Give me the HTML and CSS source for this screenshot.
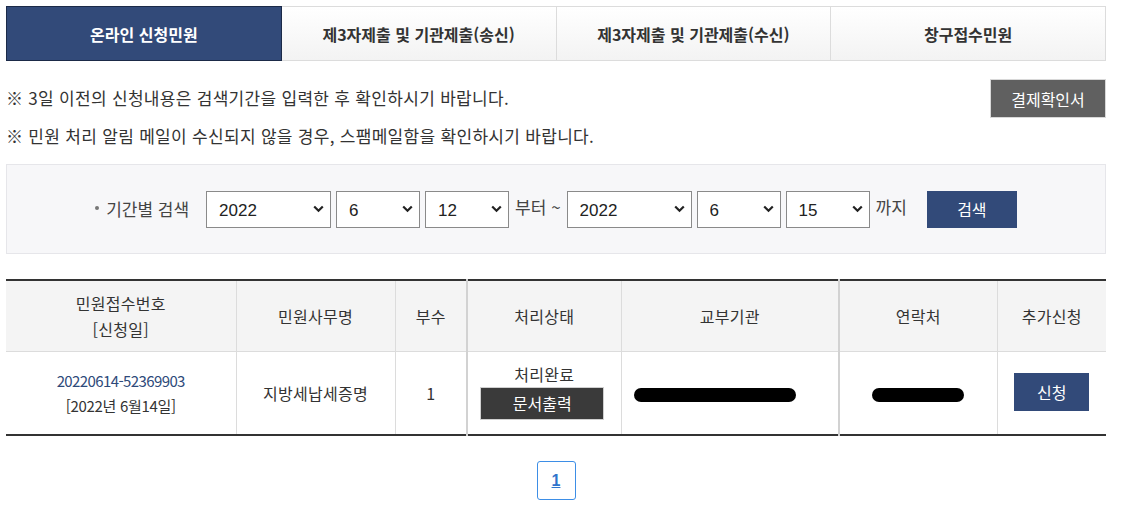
FILE: index.html
```html
<!DOCTYPE html>
<html lang="ko">
<head>
<meta charset="utf-8">
<title>온라인 신청민원</title>
<link rel="stylesheet" href="styles.css">
</head>
<body>
<div class="page">
  <nav class="tabs">
    <a class="tab active">온라인 신청민원</a>
    <a class="tab">제3자제출 및 기관제출(송신)</a>
    <a class="tab">제3자제출 및 기관제출(수신)</a>
    <a class="tab">창구접수민원</a>
  </nav>

  <section class="notice">
    <div class="notice-text">
      <p>※ 3일 이전의 신청내용은 검색기간을 입력한 후 확인하시기 바랍니다.</p>
      <p>※ 민원 처리 알림 메일이 수신되지 않을 경우, 스팸메일함을 확인하시기 바랍니다.</p>
    </div>
    <button class="btn-gray">결제확인서</button>
  </section>

  <section class="search">
    <span class="search-label"><span class="dot"></span>기간별 검색</span>
    <select class="sel sel-year"><option>2022</option></select>
    <select class="sel sel-sm"><option>6</option></select>
    <select class="sel sel-sm"><option>12</option></select>
    <span class="word">부터 ~</span>
    <select class="sel sel-year"><option>2022</option></select>
    <select class="sel sel-sm"><option>6</option></select>
    <select class="sel sel-sm"><option>15</option></select>
    <span class="word">까지</span>
    <button class="btn-navy btn-search">검색</button>
  </section>

  <table class="list">
    <colgroup>
      <col class="c1"><col class="c2"><col class="c3"><col class="c4"><col class="c5"><col class="c6"><col class="c7">
    </colgroup>
    <thead>
      <tr>
        <th>민원접수번호<br>[신청일]</th>
        <th>민원사무명</th>
        <th>부수</th>
        <th class="thick">처리상태</th>
        <th>교부기관</th>
        <th class="thick">연락처</th>
        <th>추가신청</th>
      </tr>
    </thead>
    <tbody>
      <tr>
        <td><span class="num">20220614-52369903</span><br><span class="date">[2022년 6월14일]</span></td>
        <td>지방세납세증명</td>
        <td>1</td>
        <td class="thick"><div class="status">처리완료</div><button class="btn-print">문서출력</button></td>
        <td><span class="redact r1"></span></td>
        <td class="thick"><span class="redact r2"></span></td>
        <td><button class="btn-navy btn-apply">신청</button></td>
      </tr>
    </tbody>
  </table>

  <div class="paging">
    <a class="page-num">1</a>
  </div>
</div>
</body>
</html>
```

FILE: styles.css
```css
* { box-sizing: border-box; }
body {
  margin: 0;
  background: #fff;
  color: #333;
  font-family: "Noto Sans CJK KR", "Noto Sans", sans-serif;
}
.page {
  width: 1112px;
  padding: 6px 6px 0 6px;
}
.tabs {
  display: flex;
  height: 55px;
}
.tab {
  flex: 1;
  display: flex;
  align-items: center;
  justify-content: center;
  border: 1px solid #dcdcdc;
  border-left: none;
  background: linear-gradient(#ffffff, #f3f3f3);
  font-size: 16px;
  font-weight: bold;
  color: #333;
}
.tab.active {
  background: #324a79;
  border: 1px solid #1b2a48;
  color: #fff;
}
.notice {
  display: flex;
  justify-content: space-between;
  align-items: flex-start;
  margin-top: 18px;
}
.notice-text p {
  margin: 0;
  line-height: 38px;
  font-size: 17px;
  letter-spacing: 0.3px;
  color: #333;
}
.btn-gray {
  width: 116px;
  height: 39px;
  background: #606060;
  border: 1px solid #d8d8d8;
  color: #fff;
  font-family: inherit;
  font-size: 16px;
  padding: 0;
}
.search {
  margin-top: 9px;
  height: 90px;
  background: #f7f7f9;
  border: 1px solid #e6e6ea;
  display: flex;
  align-items: center;
  justify-content: center;
}
.search-label {
  font-size: 17px;
  color: #444;
  margin-right: 17px;
  display: flex;
  align-items: center;
  margin-top: -2px;
}
.dot {
  width: 4px;
  height: 4px;
  border-radius: 50%;
  background: #777;
  margin-right: 7px;
}
.sel {
  appearance: none;
  -webkit-appearance: none;
  height: 37px;
  border: 1px solid #8a8a8a;
  background: #fff url("data:image/svg+xml;utf8,<svg xmlns='http://www.w3.org/2000/svg' width='11' height='8' viewBox='0 0 11 8'><path d='M1.2 1.5 L5.5 5.8 L9.8 1.5' fill='none' stroke='%23222' stroke-width='2.2'/></svg>") no-repeat right 6px center;
  font-family: "Liberation Sans", "Noto Sans CJK KR", sans-serif;
  font-size: 17px;
  color: #222;
  padding: 2px 0 0 12px;
  margin-right: 5px;
  border-radius: 0;
}
.sel-year { width: 125px; }
.sel-sm { width: 84px; }
.word {
  font-size: 17px;
  color: #444;
  margin: -6px 6px 0 1px;
}
.btn-navy {
  background: #324a79;
  border: none;
  color: #fff;
  font-family: inherit;
  padding: 0;
}
.btn-search {
  width: 90px;
  height: 37px;
  font-size: 16px;
  margin-left: 14px;
}
.list {
  margin-top: 25px;
  width: 1100px;
  border-collapse: collapse;
  table-layout: fixed;
  border-top: 2px solid #333;
  border-bottom: 2px solid #333;
}
.c1 { width: 230px; }
.c2 { width: 159px; }
.c3 { width: 72px; }
.c4 { width: 154px; }
.c5 { width: 218px; }
.c6 { width: 158px; }
.c7 { width: 109px; }
.list th, .list td {
  text-align: center;
  vertical-align: middle;
  border-left: 1px solid #dcdcdc;
  font-size: 16px;
  color: #333;
  letter-spacing: 0.3px;
}
.list th:first-child, .list td:first-child { border-left: none; }
.list .thick { border-left: 2px solid #d2d2d2; }
.list th {
  background: #f4f4f4;
  font-weight: normal;
  height: 71px;
  line-height: 26px;
  border-bottom: 1px solid #dcdcdc;
}
.list td {
  height: 84px;
  line-height: 24px;
}
.num { color: #2e4a7a; font-size: 15px; letter-spacing: -0.6px; }
.date { font-size: 15px; letter-spacing: -0.3px; }
.status { line-height: 22px; margin-top: -3px; }
.btn-print {
  width: 124px;
  height: 33px;
  background: #3a3a3a;
  border: 1px solid #cfcfcf;
  color: #fff;
  font-family: inherit;
  font-size: 16px;
  padding: 0;
  margin-top: 2px;
  margin-right: 4px;
}
.redact {
  display: inline-block;
  height: 14px;
  background: #000;
  border-radius: 7px;
  vertical-align: middle;
}
.r1 { width: 162px; margin-right: 30px; }
.r2 { width: 92px; }
.btn-apply {
  width: 75px;
  height: 38px;
  font-size: 16px;
  margin-top: -2px;
}
.paging {
  display: flex;
  justify-content: center;
  margin-top: 25px;
  width: 1100px;
}
.page-num {
  width: 39px;
  height: 39px;
  border: 1px solid #3d8ee6;
  border-radius: 3px;
  display: flex;
  align-items: center;
  justify-content: center;
  color: #2f74cc;
  font-weight: bold;
  font-size: 16px;
  text-decoration: underline;
  font-family: "Liberation Sans", sans-serif;
}
```
